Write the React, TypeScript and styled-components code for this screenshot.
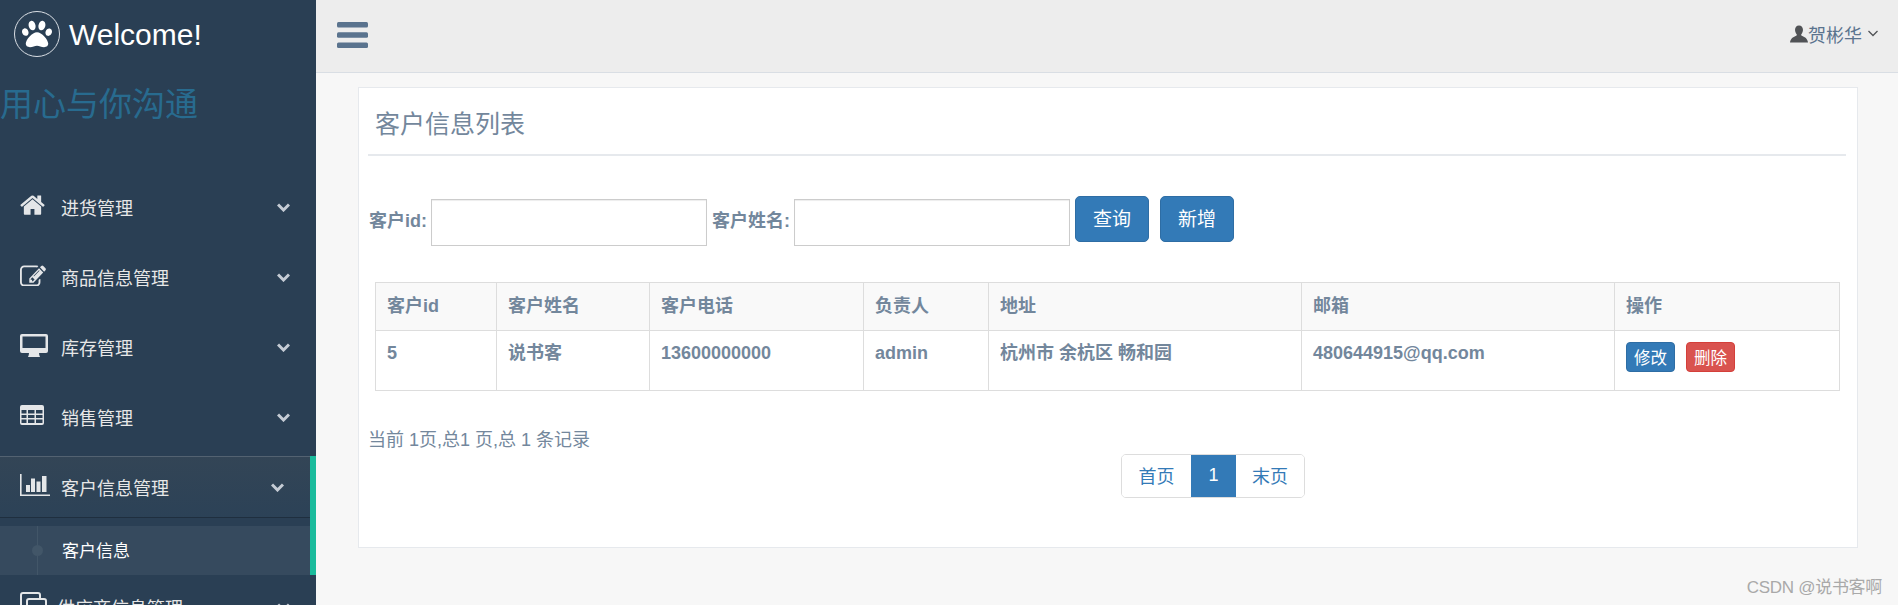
import { ReactNode } from 'react';
import styled, { createGlobalStyle } from 'styled-components';
import { FaPaw } from 'react-icons/fa';

const GlobalStyle = createGlobalStyle`
  html, body {
    margin: 0;
    padding: 0;
    background: #f7f7f7;
    font-family: 'Liberation Sans', 'Noto Sans CJK SC', sans-serif;
    color: #73879c;
    font-size: 18px;
  }
  * { box-sizing: border-box; }
`;

const Page = styled.div`
  position: relative;
  display: flex;
  width: 1898px;
  height: 605px;
  overflow: hidden;
`;

const Sidebar = styled.aside`
  flex: 0 0 316px;
  height: 100%;
  overflow: hidden;
  background: #2a3f54;
`;

const Brand = styled.div`
  display: flex;
  align-items: center;
  gap: 9px;
  padding: 11px 0 0 14px;
  color: #fff;
  font-size: 30px;
`;

const BrandName = styled.span`
  margin-top: 2px;
`;

const LogoCircle = styled.span`
  display: flex;
  align-items: center;
  justify-content: center;
  width: 46px;
  height: 46px;
  border: 1.5px solid #d9dee4;
  border-radius: 50%;
  font-size: 30px;
  color: #fff;
`;

const Slogan = styled.div`
  margin-top: 28px;
  height: 39px;
  font-size: 33px;
  line-height: 39px;
  color: #286b8f;
  white-space: nowrap;
`;

const Menu = styled.ul`
  list-style: none;
  margin: 49px 0 0;
  padding: 0;
`;

const MenuItem = styled.li<{ $active?: boolean }>`
  margin-top: ${({ $active }) => ($active ? '3px' : '0')};
  border-right: ${({ $active }) => ($active ? '6px solid #1abb9c' : 'none')};
`;

const MenuLink = styled.div<{ $active?: boolean; $height?: number }>`
  display: flex;
  align-items: center;
  height: ${({ $active, $height }) => ($active ? 61 : $height ?? 70)}px;
  padding: 0 26px 2px 20px;
  font-size: 18px;
  color: #e7e7e7;
  ${({ $active }) =>
    $active &&
    `
    background: linear-gradient(#334556, #2c4257);
    box-shadow: rgba(0, 0, 0, 0.25) 0 1px 0, inset rgba(255, 255, 255, 0.16) 0 1px 0;
    padding-top: 3px;
  `}
`;

const MenuIcon = styled.span<{ $width?: number }>`
  display: flex;
  flex: 0 0 ${({ $width }) => $width ?? 41}px;
  margin-bottom: 4px;
  color: #e4e6e8;
`;

const MenuLabel = styled.span`
  flex: 1;
  white-space: nowrap;
`;

const ChildMenu = styled.ul`
  list-style: none;
  margin: 9px 0 0;
  padding: 0;
`;

const ChildItem = styled.li`
  position: relative;
  display: flex;
  align-items: center;
  height: 49px;
  padding: 0 0 2px 62px;
  font-size: 17px;
  color: #fff;
  background: rgba(255, 255, 255, 0.06);

  &::before {
    content: '';
    position: absolute;
    left: 37px;
    top: 0;
    bottom: 0;
    width: 1px;
    background: #425668;
  }

  &::after {
    content: '';
    position: absolute;
    left: 32px;
    top: 19px;
    width: 11px;
    height: 11px;
    border-radius: 50%;
    background: #425668;
  }
`;

const Main = styled.main`
  flex: 1;
  min-width: 0;
`;

const TopBar = styled.header`
  display: flex;
  align-items: center;
  justify-content: space-between;
  height: 73px;
  padding: 0 20px 2px 21px;
  background: #ededed;
  border-bottom: 1px solid #d9dee4;
`;

const UserBox = styled.div`
  display: flex;
  align-items: center;
  margin-bottom: 3px;
  font-size: 18px;
  color: #515356;
`;

const UserName = styled.span`
  color: #5a738e;
  margin-right: 6px;
`;

const Panel = styled.section`
  height: 461px;
  margin: 14px 40px 0 42px;
  padding: 0 11px 0 9px;
  background: #fff;
  border: 1px solid #e6e9ed;
`;

const PanelTitle = styled.h2`
  height: 68px;
  margin: 0;
  padding: 6px 0 0 7px;
  font-size: 25px;
  font-weight: 400;
  line-height: 60px;
  color: #73879c;
  border-bottom: 2px solid #e6e9ed;
`;

const SearchForm = styled.form`
  display: flex;
  align-items: flex-start;
  gap: 5px;
  margin-top: 40px;
  padding-left: 1px;
`;

const FieldLabel = styled.label`
  height: 50px;
  margin-right: -1px;
  font-weight: 700;
  line-height: 50px;
  white-space: nowrap;
`;

const TextInput = styled.input`
  width: 276px;
  height: 47px;
  margin-top: 3px;
  border: 1px solid #ccc;
  background: #fff;
  box-shadow: inset 0 1px 1px rgba(0, 0, 0, 0.075);
  outline: none;
`;

const Button = styled.button<{ $gapLeft?: number }>`
  width: 74px;
  height: 46px;
  margin-left: ${({ $gapLeft }) => $gapLeft ?? 0}px;
  padding: 0 0 3px;
  border: 1px solid #2e6da4;
  border-radius: 5px;
  background: #337ab7;
  color: #fff;
  font-family: inherit;
  font-size: 19px;
`;

const Table = styled.table`
  width: 1464px;
  margin: 36px 0 0 7px;
  border-collapse: collapse;
  table-layout: fixed;
`;

const HeadCell = styled.th<{ $width: number }>`
  width: ${({ $width }) => $width}px;
  height: 48px;
  padding: 0 11px 5px;
  border: 1px solid #ddd;
  background: #f9f9f9;
  font-weight: 700;
  text-align: left;
`;

const BodyCell = styled.td`
  height: 60px;
  padding: 11px 11px 0;
  border: 1px solid #ddd;
  font-weight: 700;
  line-height: 22px;
  vertical-align: top;
`;

const SmallButton = styled.button<{ $danger?: boolean }>`
  display: inline-block;
  width: 49px;
  height: 30px;
  margin: 0 11px 0 0;
  padding: 0;
  border: 1px solid ${({ $danger }) => ($danger ? '#d43f3a' : '#2e6da4')};
  border-radius: 4px;
  background: ${({ $danger }) => ($danger ? '#d9534f' : '#337ab7')};
  color: #fff;
  font-family: inherit;
  font-size: 16.5px;
  vertical-align: top;
`;

const PageStatus = styled.div`
  margin-top: 38px;
  height: 22px;
  line-height: 22px;
  white-space: nowrap;
`;

const Pagination = styled.div`
  display: flex;
  width: 184px;
  height: 44px;
  margin: 3px 0 0 753px;
  border: 1px solid #ddd;
  border-radius: 5px;
  overflow: hidden;
`;

const PageCell = styled.span<{ $active?: boolean; $width: number }>`
  display: flex;
  align-items: center;
  justify-content: center;
  width: ${({ $width }) => $width}px;
  margin: ${({ $active }) => ($active ? '-1px 0' : '0')};
  padding-bottom: 2px;
  background: ${({ $active }) => ($active ? '#337ab7' : '#fff')};
  color: ${({ $active }) => ($active ? '#fff' : '#337ab7')};
  font-size: 18px;
`;

const Watermark = styled.div`
  position: absolute;
  right: 16px;
  top: 577px;
  font-size: 17px;
  letter-spacing: -0.3px;
  line-height: 22px;
  color: #a9a9a9;
  white-space: nowrap;
`;

function HomeIcon() {
  return (
    <svg width="25" height="22" viewBox="64 220 1664 1340" fill="currentColor">
      <path d="M1472 992v480q0 26-19 45t-45 19h-384v-384h-256v384h-384q-26 0-45-19t-19-45v-480q0-1 .5-3t.5-3l575-474 575 474q1 2 1 6zm223-69l-62 74q-8 9-21 11h-3q-13 0-21-7l-692-577-692 577q-12 8-24 7-13-2-21-11l-62-74q-8-10-7-23.5t11-21.5l719-599q32-26 76-26t76 26l244 204v-195q0-14 9-23t23-9h192q14 0 23 9t9 23v408l219 182q10 8 11 21.5t-7 23.5z" />
    </svg>
  );
}

function EditIcon() {
  return (
    <svg width="26" height="21" viewBox="0 100 1792 1400" preserveAspectRatio="none" fill="currentColor">
      <path d="M888 1184l116-116-152-152-116 116v56h96v96h56zm440-720q-16-16-33 1l-350 350q-17 17-1 33t33-1l350-350q17-17 1-33zm80 594v190q0 119-84.5 203.5t-203.5 84.5h-832q-119 0-203.5-84.5t-84.5-203.5v-832q0-119 84.5-203.5t203.5-84.5h832q63 0 117 25 15 7 18 23 3 17-9 29l-49 49q-14 14-32 8-23-6-45-6h-832q-66 0-113 47t-47 113v832q0 66 47 113t113 47h832q66 0 113-47t47-113v-126q0-13 9-22l64-64q15-15 35-7t20 29zm-96-738l288 288-672 672h-288v-288zm444 132l-92 92-288-288 92-92q28-28 68-28t68 28l152 152q28 28 28 68t-28 68z" />
    </svg>
  );
}

function DesktopIcon() {
  return (
    <svg width="28" height="23" viewBox="0 0 28 23" fill="currentColor">
      <path
        fillRule="evenodd"
        d="M2 0h24a2 2 0 0 1 2 2v15a2 2 0 0 1-2 2h-7q0 2 1 4H8q1-2 1-4H2a2 2 0 0 1-2-2V2a2 2 0 0 1 2-2zm.5 2.5v11.5h23V2.5z"
      />
    </svg>
  );
}

function TableIcon() {
  return (
    <svg width="24" height="20" viewBox="0 0 24 20" fill="currentColor">
      <path
        fillRule="evenodd"
        d="M2 0h20a2 2 0 0 1 2 2v16a2 2 0 0 1-2 2H2a2 2 0 0 1-2-2V2a2 2 0 0 1 2-2zM1.500 5v3.500h5V5zm6.500 0v3.500h6.500V5zm8 0v3.500h6.500V5zM1.500 10v3h5v-3zm6.500 0v3h6.500v-3zm8 0v3h6.500v-3zM1.500 14.500V18h5v-3.500zm6.500 0V18h6.500v-3.500zm8 0V18h6.500v-3.500z"
      />
    </svg>
  );
}

function BarChartIcon() {
  return (
    <svg width="30" height="22" viewBox="0 0 30 22" fill="currentColor">
      <path d="M0 0h1.600v20.400H30V22H0z" />
      <path d="M6 11h4v7H6zM11 4.500h4V18h-4zM16.500 7.500h4V18h-4zM22 2h4.500v16H22z" />
    </svg>
  );
}

function CloneIcon() {
  return (
    <svg width="27" height="27" viewBox="0 0 27 27" fill="none" stroke="currentColor" strokeWidth="2">
      <path d="M1 19V3a2 2 0 0 1 2-2h15a2 2 0 0 1 2 2v3" />
      <rect x="7" y="7" width="19" height="19" rx="2" />
    </svg>
  );
}

function ChevronIcon() {
  return (
    <svg width="13" height="9" viewBox="0 0 13 9" fill="none" stroke="#c5ccd5" strokeWidth="3">
      <path d="M1 1.500l5.500 5.500 5.500-5.500" />
    </svg>
  );
}

function HamburgerIcon() {
  return (
    <svg width="31" height="26" viewBox="0 0 31 26" fill="#5a738e">
      <rect y="0" width="31" height="5.500" rx="1.500" />
      <rect y="10.300" width="31" height="5.500" rx="1.500" />
      <rect y="20.500" width="31" height="5.500" rx="1.500" />
    </svg>
  );
}

function UserIcon() {
  return (
    <svg width="18" height="18" viewBox="0 0 19 18" fill="currentColor">
      <path d="M9.500 0c2.700 0 4.200 2 4.200 4.600 0 2-.8 3.700-1.900 4.800 0 .8.300 1.300 1.200 1.700 2.800 1.200 5.300 2.400 6 6.900H0c.7-4.500 3.200-5.700 6-6.900.9-.4 1.200-.9 1.200-1.700C6.100 8.300 5.300 6.600 5.300 4.600 5.300 2 6.800 0 9.500 0z" />
    </svg>
  );
}

function SmallChevron() {
  return (
    <svg width="10" height="7" viewBox="0 0 10 7" fill="none" stroke="#515356" strokeWidth="1.300">
      <path d="M.500 1l4.500 4.500L9.500 1" />
    </svg>
  );
}

interface NavEntry {
  label: string;
  icon: ReactNode;
  active?: boolean;
  iconWidth?: number;
  height?: number;
  children?: string[];
}

const NAV: NavEntry[] = [
  { label: '进货管理', icon: <HomeIcon /> },
  { label: '商品信息管理', icon: <EditIcon /> },
  { label: '库存管理', icon: <DesktopIcon /> },
  { label: '销售管理', icon: <TableIcon /> },
  { label: '客户信息管理', icon: <BarChartIcon />, active: true, children: ['客户信息'] },
  { label: '供应商信息管理', icon: <CloneIcon />, iconWidth: 37, height: 66 },
];

const COLUMNS: { title: string; width: number }[] = [
  { title: '客户id', width: 121 },
  { title: '客户姓名', width: 153 },
  { title: '客户电话', width: 214 },
  { title: '负责人', width: 125 },
  { title: '地址', width: 313 },
  { title: '邮箱', width: 313 },
  { title: '操作', width: 225 },
];

const ROW = ['5', '说书客', '13600000000', 'admin', '杭州市 余杭区 畅和园', '480644915@qq.com'];

function App() {
  return (
    <Page>
      <GlobalStyle />
      <Sidebar>
        <Brand>
          <LogoCircle>
            <FaPaw />
          </LogoCircle>
          <BrandName>Welcome!</BrandName>
        </Brand>
        <Slogan>用心与你沟通</Slogan>
        <Menu>
          {NAV.map((item) => (
            <MenuItem key={item.label} $active={item.active}>
              <MenuLink $active={item.active} $height={item.height}>
                <MenuIcon $width={item.iconWidth}>{item.icon}</MenuIcon>
                <MenuLabel>{item.label}</MenuLabel>
                <ChevronIcon />
              </MenuLink>
              {item.children && (
                <ChildMenu>
                  {item.children.map((child) => (
                    <ChildItem key={child}>{child}</ChildItem>
                  ))}
                </ChildMenu>
              )}
            </MenuItem>
          ))}
        </Menu>
      </Sidebar>
      <Main>
        <TopBar>
          <HamburgerIcon />
          <UserBox>
            <UserIcon />
            <UserName>贺彬华</UserName>
            <SmallChevron />
          </UserBox>
        </TopBar>
        <Panel>
          <PanelTitle>客户信息列表</PanelTitle>
          <SearchForm>
            <FieldLabel>客户id:</FieldLabel>
            <TextInput />
            <FieldLabel>客户姓名:</FieldLabel>
            <TextInput />
            <Button type="button">查询</Button>
            <Button type="button" $gapLeft={6}>
              新增
            </Button>
          </SearchForm>
          <Table>
            <thead>
              <tr>
                {COLUMNS.map((col) => (
                  <HeadCell key={col.title} $width={col.width}>
                    {col.title}
                  </HeadCell>
                ))}
              </tr>
            </thead>
            <tbody>
              <tr>
                {ROW.map((cell) => (
                  <BodyCell key={cell}>{cell}</BodyCell>
                ))}
                <BodyCell>
                  <SmallButton type="button">修改</SmallButton>
                  <SmallButton type="button" $danger>
                    删除
                  </SmallButton>
                </BodyCell>
              </tr>
            </tbody>
          </Table>
          <PageStatus>当前 1页,总1 页,总 1 条记录</PageStatus>
          <Pagination>
            <PageCell $width={69}>首页</PageCell>
            <PageCell $width={45} $active>
              1
            </PageCell>
            <PageCell $width={68}>末页</PageCell>
          </Pagination>
        </Panel>
      </Main>
      <Watermark>CSDN @说书客啊</Watermark>
    </Page>
  );
}

export default App;
